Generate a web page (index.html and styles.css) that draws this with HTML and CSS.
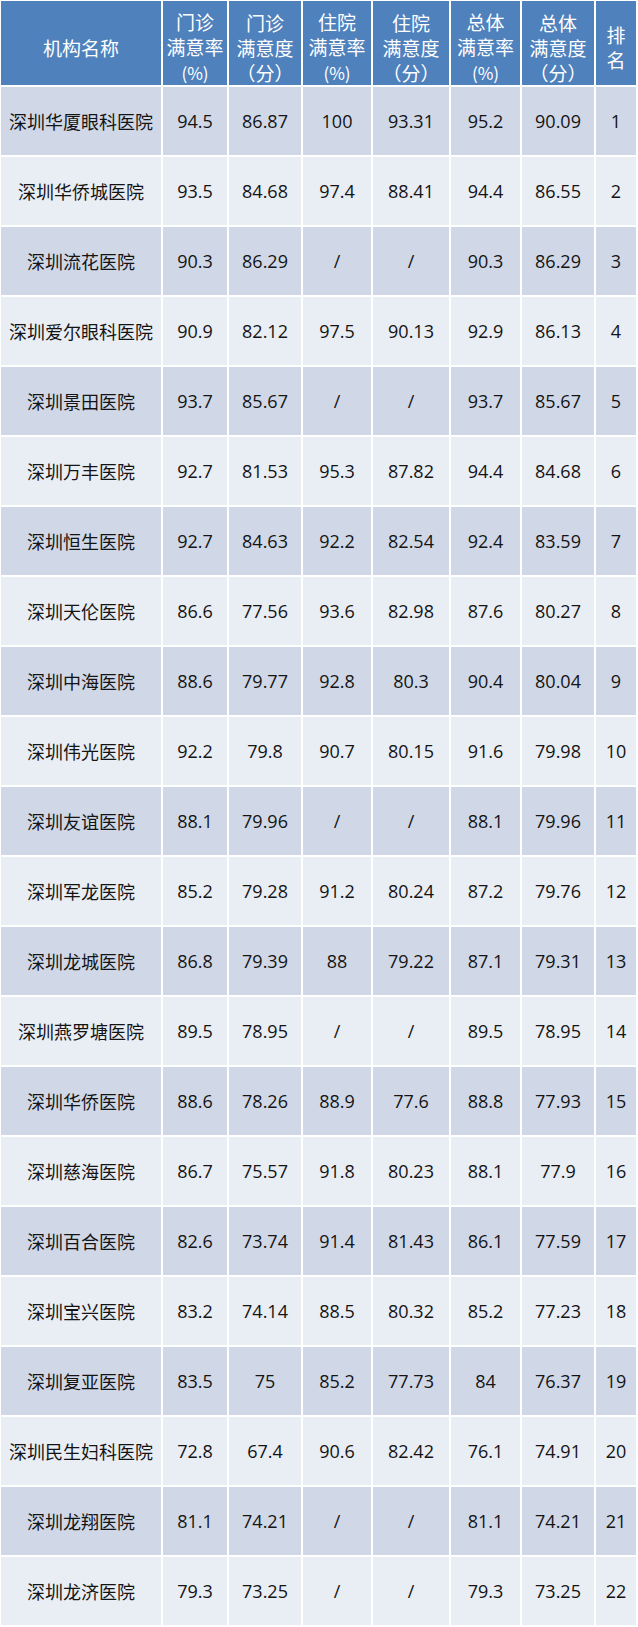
FILE: index.html
```html
<!DOCTYPE html>
<html lang="zh-CN">
<head>
<meta charset="utf-8">
<title>医院满意度排名</title>
<link rel="stylesheet" href="styles.css">
</head>
<body>
<div class="wrap">
<table class="rank">
<colgroup>
<col class="c-name"><col class="c2"><col class="c3"><col class="c4"><col class="c5"><col class="c6"><col class="c7"><col class="c8">
</colgroup>
<thead>
<tr>
<th>机构名称</th>
<th>门诊<br>满意率<br><span class="pct">(%)</span></th>
<th>门诊<br>满意度<br>（分）</th>
<th>住院<br>满意率<br><span class="pct">(%)</span></th>
<th>住院<br>满意度<br>（分）</th>
<th>总体<br>满意率<br><span class="pct">(%)</span></th>
<th>总体<br>满意度<br>（分）</th>
<th>排<br>名</th>
</tr>
</thead>
<tbody>
<tr><td class="nm">深圳华厦眼科医院</td><td>94.5</td><td>86.87</td><td>100</td><td>93.31</td><td>95.2</td><td>90.09</td><td>1</td></tr>
<tr><td class="nm">深圳华侨城医院</td><td>93.5</td><td>84.68</td><td>97.4</td><td>88.41</td><td>94.4</td><td>86.55</td><td>2</td></tr>
<tr><td class="nm">深圳流花医院</td><td>90.3</td><td>86.29</td><td>/</td><td>/</td><td>90.3</td><td>86.29</td><td>3</td></tr>
<tr><td class="nm">深圳爱尔眼科医院</td><td>90.9</td><td>82.12</td><td>97.5</td><td>90.13</td><td>92.9</td><td>86.13</td><td>4</td></tr>
<tr><td class="nm">深圳景田医院</td><td>93.7</td><td>85.67</td><td>/</td><td>/</td><td>93.7</td><td>85.67</td><td>5</td></tr>
<tr><td class="nm">深圳万丰医院</td><td>92.7</td><td>81.53</td><td>95.3</td><td>87.82</td><td>94.4</td><td>84.68</td><td>6</td></tr>
<tr><td class="nm">深圳恒生医院</td><td>92.7</td><td>84.63</td><td>92.2</td><td>82.54</td><td>92.4</td><td>83.59</td><td>7</td></tr>
<tr><td class="nm">深圳天伦医院</td><td>86.6</td><td>77.56</td><td>93.6</td><td>82.98</td><td>87.6</td><td>80.27</td><td>8</td></tr>
<tr><td class="nm">深圳中海医院</td><td>88.6</td><td>79.77</td><td>92.8</td><td>80.3</td><td>90.4</td><td>80.04</td><td>9</td></tr>
<tr><td class="nm">深圳伟光医院</td><td>92.2</td><td>79.8</td><td>90.7</td><td>80.15</td><td>91.6</td><td>79.98</td><td>10</td></tr>
<tr><td class="nm">深圳友谊医院</td><td>88.1</td><td>79.96</td><td>/</td><td>/</td><td>88.1</td><td>79.96</td><td>11</td></tr>
<tr><td class="nm">深圳军龙医院</td><td>85.2</td><td>79.28</td><td>91.2</td><td>80.24</td><td>87.2</td><td>79.76</td><td>12</td></tr>
<tr><td class="nm">深圳龙城医院</td><td>86.8</td><td>79.39</td><td>88</td><td>79.22</td><td>87.1</td><td>79.31</td><td>13</td></tr>
<tr><td class="nm">深圳燕罗塘医院</td><td>89.5</td><td>78.95</td><td>/</td><td>/</td><td>89.5</td><td>78.95</td><td>14</td></tr>
<tr><td class="nm">深圳华侨医院</td><td>88.6</td><td>78.26</td><td>88.9</td><td>77.6</td><td>88.8</td><td>77.93</td><td>15</td></tr>
<tr><td class="nm">深圳慈海医院</td><td>86.7</td><td>75.57</td><td>91.8</td><td>80.23</td><td>88.1</td><td>77.9</td><td>16</td></tr>
<tr><td class="nm">深圳百合医院</td><td>82.6</td><td>73.74</td><td>91.4</td><td>81.43</td><td>86.1</td><td>77.59</td><td>17</td></tr>
<tr><td class="nm">深圳宝兴医院</td><td>83.2</td><td>74.14</td><td>88.5</td><td>80.32</td><td>85.2</td><td>77.23</td><td>18</td></tr>
<tr><td class="nm">深圳复亚医院</td><td>83.5</td><td>75</td><td>85.2</td><td>77.73</td><td>84</td><td>76.37</td><td>19</td></tr>
<tr><td class="nm">深圳民生妇科医院</td><td>72.8</td><td>67.4</td><td>90.6</td><td>82.42</td><td>76.1</td><td>74.91</td><td>20</td></tr>
<tr><td class="nm">深圳龙翔医院</td><td>81.1</td><td>74.21</td><td>/</td><td>/</td><td>81.1</td><td>74.21</td><td>21</td></tr>
<tr><td class="nm">深圳龙济医院</td><td>79.3</td><td>73.25</td><td>/</td><td>/</td><td>79.3</td><td>73.25</td><td>22</td></tr>
</tbody>
</table>
</div>
</body>
</html>
```

FILE: styles.css
```css
html, body {
  margin: 0;
  padding: 0;
  background: #ffffff;
}
.wrap {
  width: 638px;
  overflow: hidden;
}
.rank {
  margin: -1px 0 0 -1px;
  width: 639px;
  table-layout: fixed;
  border-collapse: separate;
  border-spacing: 2px;
  background: #ffffff;
  color: #141414;
  font-family: "Open Sans", "Noto Sans CJK SC", sans-serif;
}
.c-name { width: 160px; }
.c2 { width: 64px; }
.c3 { width: 72px; }
.c4 { width: 68px; }
.c5 { width: 76px; }
.c6 { width: 69px; }
.c7 { width: 72px; }
.c8 { width: 40px; }
.rank th, .rank td {
  padding: 0;
  text-align: center;
  vertical-align: middle;
  white-space: nowrap;
  overflow: hidden;
}
.rank th {
  height: 76px;
  padding-top: 8px;
  background: #4f81bd;
  color: #ffffff;
  font-family: "Noto Sans CJK SC", sans-serif;
  font-weight: normal;
  font-size: 19px;
  line-height: 25px;
}
.pct {
  font-size: 17px;
}
.rank td {
  height: 68px;
  font-size: 18px;
  line-height: 24px;
}
.rank td.nm {
  font-family: "Noto Sans CJK SC", sans-serif;
  font-size: 18px;
}
.rank tbody tr:nth-child(odd) td { background: #d0d8e8; }
.rank tbody tr:nth-child(even) td { background: #e9edf4; }
```
